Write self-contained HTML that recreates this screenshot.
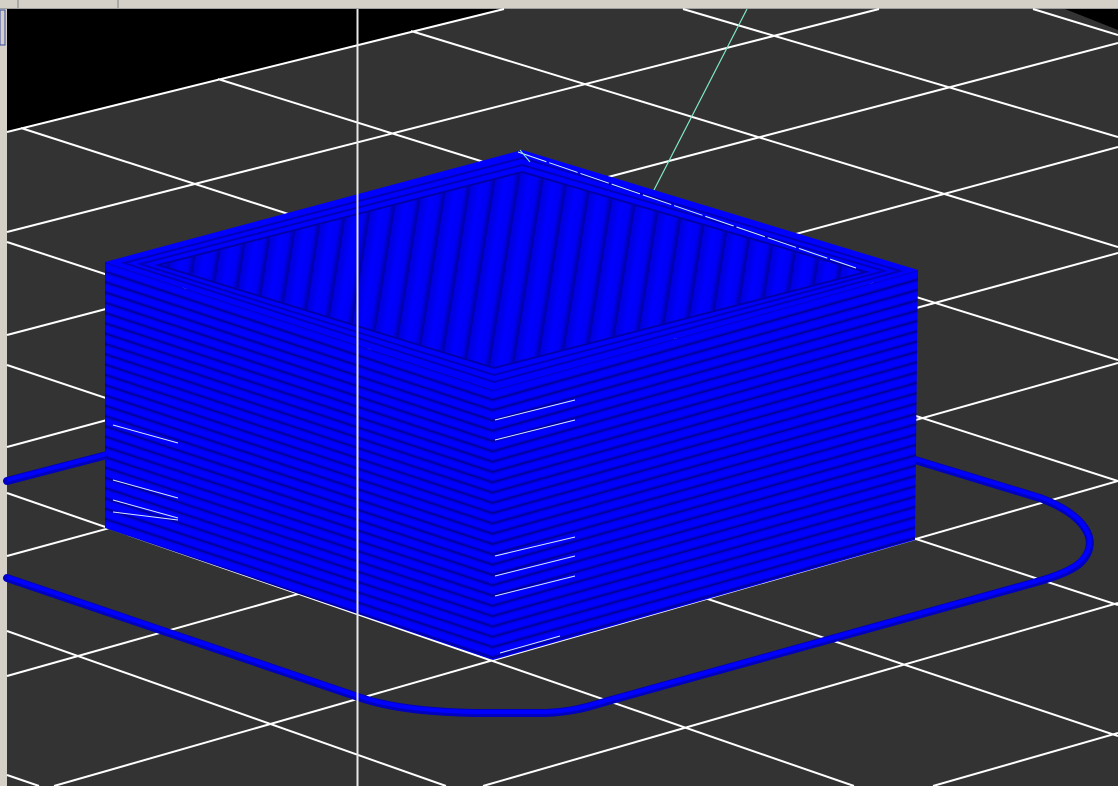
<!DOCTYPE html>
<html><head><meta charset="utf-8"><style>
html,body{margin:0;padding:0;width:1118px;height:786px;overflow:hidden;background:#d4d0c8}
svg{display:block}
</style></head><body>
<svg width="1118" height="786" viewBox="0 0 1118 786" xmlns="http://www.w3.org/2000/svg">
<defs>
<linearGradient id="lg" x1="0" y1="0" x2="0" y2="1">
<stop offset="0" stop-color="#0000c8"/><stop offset="0.25" stop-color="#0000ff"/><stop offset="0.7" stop-color="#0000ff"/><stop offset="0.9" stop-color="#0000b0"/><stop offset="1" stop-color="#000070"/>
</linearGradient>
<pattern id="pl" width="40" height="10.3" patternUnits="userSpaceOnUse" patternTransform="translate(105,262) skewY(18.3)">
<rect width="40" height="10.3" fill="url(#lg)"/></pattern>
<pattern id="pr" width="40" height="10.3" patternUnits="userSpaceOnUse" patternTransform="translate(493,390) skewY(-15.8)">
<rect width="40" height="10.3" fill="url(#lg)"/></pattern>
<linearGradient id="sg" x1="0" y1="0" x2="1" y2="0">
<stop offset="0" stop-color="#0000d8"/><stop offset="0.4" stop-color="#0000ff"/><stop offset="0.75" stop-color="#0000f4"/><stop offset="1" stop-color="#0000a0"/>
</linearGradient>
<pattern id="pt" width="24" height="40" patternUnits="userSpaceOnUse" patternTransform="translate(500,150) skewX(-9)">
<rect width="24" height="40" fill="url(#sg)"/></pattern>
</defs>
<rect x="0" y="0" width="1118" height="786" fill="#d4d0c8"/>
<line x1="0" y1="8.5" x2="1118" y2="8.5" stroke="#a0a0a0"/>
<line x1="18" y1="0" x2="18" y2="8" stroke="#808080"/>
<line x1="118" y1="0" x2="118" y2="8" stroke="#808080"/>
<rect x="0" y="10" width="5" height="35" fill="none" stroke="#3a4a9a"/>
<rect x="7" y="9" width="1111" height="777" fill="#333333"/>
<polygon points="7,9 504,9 7,132" fill="#000"/>
<polygon points="1065,9 1118,9 1118,30" fill="#000"/>
<g stroke="#ffffff" stroke-width="2" fill="none">
<line x1="7" y1="132" x2="504" y2="9"/>
<line x1="7" y1="232" x2="879" y2="9"/>
<line x1="7" y1="335" x2="1118" y2="43"/>
<line x1="7" y1="447" x2="1118" y2="147"/>
<line x1="7" y1="556" x2="1118" y2="253"/>
<line x1="7" y1="676" x2="1118" y2="363"/>
<line x1="54" y1="786" x2="1118" y2="481"/>
<line x1="483" y1="786" x2="1118" y2="603"/>
<line x1="933" y1="786" x2="1118" y2="733"/>
<line x1="1033" y1="9" x2="1118" y2="35"/>
<line x1="683" y1="9" x2="1118" y2="137"/>
<line x1="411" y1="31" x2="1118" y2="247"/>
<line x1="218" y1="79" x2="1118" y2="360"/>
<line x1="21" y1="128" x2="1118" y2="481"/>
<line x1="7" y1="242" x2="1118" y2="605"/>
<line x1="7" y1="365" x2="1118" y2="736"/>
<line x1="7" y1="493" x2="854" y2="786"/>
<line x1="7" y1="631" x2="446" y2="786"/>
<line x1="7" y1="775" x2="39" y2="786"/>
</g>
<line x1="747" y1="9" x2="654" y2="190" stroke="#7fe8c8" stroke-width="1.2"/>
<path d="M7,481 L107,455 M915,460 L1040,498 C1085,515 1100,540 1083,560 C1075,570 1055,577 1033,583 L608,701 C585,708 570,712 545,713 L475,713 C420,712 385,706 361,698 L7,578" fill="none" stroke="#0000c0" stroke-width="8" stroke-linecap="round"/>
<path d="M7,480 L107,454 M915,459 L1040,497 C1085,514 1100,540 1082,559 C1074,569 1055,576 1033,582 L608,700 C585,707 570,711 545,712 L475,712 C420,711 385,705 361,697 L7,577" fill="none" stroke="#0000ff" stroke-width="4"/>
<polygon points="105,262 493,390 493,660 105,528" fill="url(#pl)"/>
<polygon points="493,390 918,270 915,540 493,660" fill="url(#pr)"/>
<polygon points="522,150 918,270 493,390 105,262" fill="#0000ff"/>
<polygon points="522,158 900,271 494,382 124,263" fill="none" stroke="#0000b8" stroke-width="2"/>
<polygon points="522,165 884,271 494,375 140,264" fill="none" stroke="#0000b8" stroke-width="2"/>
<polygon points="522,172 866,272 494,368 158,265" fill="url(#pt)"/>
<polygon points="522,172 866,272 494,368 158,265" fill="none" stroke="#0000a8" stroke-width="2"/>
<line x1="518" y1="152" x2="856" y2="268" stroke="#cfefff" stroke-width="1" stroke-dasharray="30,3"/>
<line x1="520" y1="150" x2="530" y2="162" stroke="#7fe8c8" stroke-width="1"/>
<g stroke="#d8e8ff" stroke-width="1" fill="none">
<path d="M113,425 L178,443"/><path d="M113,480 L178,498"/><path d="M113,500 L178,518"/><path d="M113,512 L178,520"/>
<path d="M495,420 L575,400"/><path d="M495,440 L575,420"/><path d="M495,556 L575,537"/><path d="M495,576 L575,556"/><path d="M495,596 L575,576"/><path d="M500,653 L560,636"/>
</g>
<line x1="357.5" y1="9" x2="357.5" y2="786" stroke="#e8e8e8" stroke-width="2"/>
</svg>
</body></html>
